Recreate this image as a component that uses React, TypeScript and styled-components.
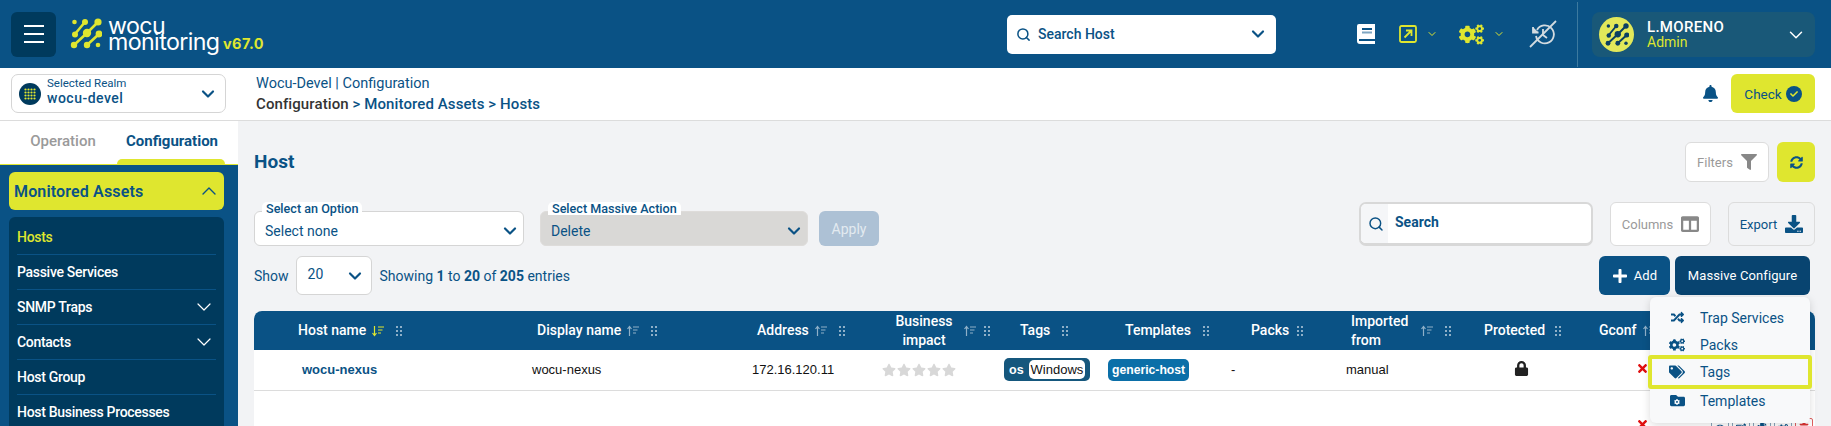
import React from "react";
import styled, { createGlobalStyle } from "styled-components";
import { ChevronDown, ChevronUp, Search as SearchGlyph } from "lucide-react";
import {
  FaBell, FaCheck, FaCogs, FaColumns, FaDownload, FaFilter, FaLock, FaPlus, FaRandom,
  FaStar, FaSyncAlt, FaTags, FaTimes, FaFolder, FaCog, FaEye, FaEdit, FaTrash, FaCopy,
} from "react-icons/fa";

const BLUE = "#0a5285";
const DARK = "#003a5d";
const LIME = "#dfe62f";
const UI = `Roboto, "Liberation Sans", sans-serif`;

const Global = createGlobalStyle`
  html, body { margin: 0; padding: 0; background: #f2f3f5; }
  body { font-family: ${UI}; color: ${BLUE}; overflow: hidden; }
  * { box-sizing: border-box; }
`;

const Page = styled.div`
  width: 1831px; height: 426px; overflow: hidden; display: flex; flex-direction: column;
`;

/* top bar */
const TopBar = styled.header`
  height: 68px; flex: none; background: ${BLUE}; display: flex; align-items: center; padding: 0 16px 0 11px;
`;
const Burger = styled.button`
  width: 45px; height: 45px; border: 0; border-radius: 6px; background: ${DARK}; display: flex; flex-direction: column;
  align-items: center; justify-content: center; gap: 6px; padding: 0;
  span { display: block; width: 20px; height: 2px; background: #fff; }
`;
const LogoWrap = styled.div`
  display: flex; align-items: flex-start; margin-left: 14px; width: 195px; height: 68px; padding-top: 18px; position: relative;
`;
const LogoText = styled.div`
  margin-left: 6px; color: #fff; font-family: Inter, sans-serif; font-size: 23.2px; line-height: 16px; letter-spacing: -0.6px;
`;
const Version = styled.span`
  position: absolute; left: 153px; top: 36px; color: ${LIME}; font: 700 14.5px/16px Inter, sans-serif; letter-spacing: 0.4px;
`;
const HostSearch = styled.div`
  margin-left: 742px; width: 269px; height: 39px; background: #fff; border-radius: 5px; display: flex; align-items: center;
  padding: 0 8px 0 9px; gap: 7px; font-size: 14px; font-weight: 500; color: ${BLUE};
  span { flex: 1; }
`;
const NavIcons = styled.div`
  display: flex; align-items: center; height: 100%; margin-left: 81px;
`;
const NavSlot = styled.div<{ $w: number }>`
  width: ${(p) => p.$w}px; display: flex; align-items: center; gap: 9px; flex: none;
`;
const Divider = styled.div`
  width: 1px; height: 65px; background: #3d7a9f; margin-left: 20px; flex: none;
`;
const UserBox = styled.div`
  margin-left: 14px; width: 223px; height: 45px; border-radius: 8px; background: #195878; display: flex; align-items: center;
  padding: 0 8px 0 7px; flex: none; margin-top: 1px;
`;
const Avatar = styled.div`
  width: 35px; height: 35px; border-radius: 50%; background: #e2e85a; display: flex; align-items: center; justify-content: center; flex: none;
`;
const UserText = styled.div`
  margin-left: 13px; flex: 1; line-height: 15px;
  b { display: block; font-weight: 500; font-size: 15px; color: #fff; letter-spacing: 0.3px; }
  span { display: block; font-size: 14px; color: ${LIME}; }
`;

/* sub bar */
const SubBar = styled.div`
  height: 53px; flex: none; background: #fff; border-bottom: 1px solid #dcdcdc; display: flex; align-items: center; padding: 0 16px 1px 11px;
`;
const RealmSelect = styled.div`
  width: 215px; height: 39px; border: 1px solid #d5d5d5; border-radius: 7px; display: flex; align-items: center; padding: 0 7px 0 7px;
`;
const RealmIcon = styled.div`
  width: 22px; height: 22px; border-radius: 50%; background: ${DARK}; flex: none; display: flex; align-items: center; justify-content: center;
`;
const RealmText = styled.div`
  margin-left: 6px; flex: 1; margin-top: -3px;
  small { display: block; font-size: 11.5px; line-height: 13px; }
  b { display: block; font-size: 14px; line-height: 17px; font-weight: 500; letter-spacing: 0.5px; }
`;
const Crumbs = styled.div`
  margin-left: 30px; flex: 1; font-size: 14.5px; line-height: 20px;
  b { font-weight: 500; display: block; font-size: 15px; letter-spacing: 0.1px; }
  b i { font-style: normal; color: #333; }
`;
const CheckButton = styled.button`
  width: 84px; height: 39px; border: 0; border-radius: 6px; background: ${LIME}; color: ${BLUE}; font: 400 13.5px ${UI};
  margin-left: 12px; display: flex; align-items: center; justify-content: center; gap: 4px; padding: 0;
`;
const CheckDot = styled.span`
  width: 16px; height: 16px; border-radius: 50%; background: ${BLUE}; color: ${LIME}; display: flex; align-items: center; justify-content: center;
`;

/* body */
const Body = styled.div`
  flex: 1; display: flex; min-height: 0;
`;
const Sidebar = styled.aside`
  width: 238px; flex: none; background: ${BLUE}; display: flex; flex-direction: column;
`;
const Tabs = styled.div`
  background: #fff; height: 44px; flex: none; display: flex; border-bottom: 1px solid ${LIME}; position: relative;
  &::after { content: ""; position: absolute; left: 117px; bottom: 0; width: 108px; height: 5px; background: ${LIME}; border-radius: 5px 5px 0 0; }
`;
const Tab = styled.div<{ $active?: boolean; $w: number }>`
  width: ${(p) => p.$w}px; padding-top: 11px; text-align: center; font-size: 15px; font-weight: ${(p) => (p.$active ? 700 : 500)};
  color: ${(p) => (p.$active ? BLUE : "#9a9a9a")}; white-space: nowrap;
`;
const SideInner = styled.div`
  padding: 7px 14px 0 9px; display: flex; flex-direction: column; gap: 7px;
`;
const GroupHead = styled.div`
  height: 38px; background: ${LIME}; border-radius: 6px; display: flex; align-items: center; justify-content: space-between;
  padding: 0 3px 0 5px; font-size: 16px; font-weight: 600; color: ${BLUE}; letter-spacing: 0.15px;
`;
const Menu = styled.div`
  background: ${DARK}; border-radius: 6px 6px 0 0; padding: 3px 8px;
`;
const MenuItem = styled.div<{ $active?: boolean }>`
  height: 35px; display: flex; align-items: center; justify-content: space-between; font-size: 14px; font-weight: 500; letter-spacing: -0.3px;
  color: ${(p) => (p.$active ? LIME : "#fff")}; border-bottom: 1px solid ${BLUE};
`;

const Main = styled.main`
  flex: 1; min-width: 0; padding: 21px 16px 0; display: flex; flex-direction: column;
`;
const TitleRow = styled.div`
  display: flex; align-items: center; justify-content: space-between; height: 40px;
`;
const Title = styled.h1`
  margin: -2px 0 0; font-size: 19px; font-weight: 700; color: ${BLUE};
`;
const Tools = styled.div`
  display: flex; gap: 8px;
`;
const GhostButton = styled.button<{ $w: number; $h: number; $plain?: boolean }>`
  width: ${(p) => p.$w}px; height: ${(p) => p.$h}px; border: 1px solid #dcdcdc; border-radius: 6px;
  background: ${(p) => (p.$plain ? "#f2f3f5" : "#fff")}; color: ${(p) => (p.$plain ? BLUE : "#9a9a9a")};
  font: 400 13px ${UI}; display: flex; align-items: center; justify-content: center; gap: 8px; padding: 0;
`;
const LimeSquare = styled.button`
  width: 38px; height: 40px; border: 0; border-radius: 6px; background: ${LIME}; color: ${BLUE}; display: flex; align-items: center; justify-content: center; padding: 0;
`;
const ToolRow = styled.div`
  margin-top: 20px; height: 44px; display: flex; align-items: flex-end;
`;
const FloatSelect = styled.div<{ $disabled?: boolean }>`
  position: relative; width: ${(p) => (p.$disabled ? 268 : 270)}px; height: 35px; border-radius: 6px; margin-right: ${(p) => (p.$disabled ? 11 : 16)}px;
  background: ${(p) => (p.$disabled ? "#d9d8d6" : "#fff")}; border: 1px solid ${(p) => (p.$disabled ? "#dedcda" : "#d5d5d5")};
  display: flex; align-items: center; justify-content: space-between; padding: 4px 3px 0 10px; font-size: 14px; color: ${BLUE};
`;
const FloatLabel = styled.label`
  position: absolute; left: 7px; top: -10px; background: #fff; border-radius: 5px 5px 0 0; padding: 0 4px; font-size: 12.6px; line-height: 13px; font-weight: 500; color: ${BLUE};
`;
const Apply = styled.button`
  width: 60px; height: 35px; border: 0; border-radius: 6px; background: #adc1d5; color: #e3eaf0; font: 400 14px ${UI}; padding: 0;
`;
const RightTools = styled.div`
  margin-left: auto; display: flex; gap: 17px;
`;
const SearchBox = styled.div`
  width: 234px; height: 44px; border: 1px solid #d8d8d8; border-width: 2px 2px 3px; border-radius: 7px; background: #fff; display: flex; overflow: hidden;
  font-size: 14px; font-weight: 700; color: ${BLUE};
`;
const SearchIcon = styled.div`
  width: 27px; background: #f5f6f8; display: flex; align-items: center; justify-content: center; padding-left: 3px;
`;
const SearchLabel = styled.div`
  padding: 7px 0 0 7px; line-height: 22px;
`;
const ShowRow = styled.div`
  margin-top: 10px; height: 39px; display: flex; align-items: center; font-size: 14px; color: ${BLUE};
  b { font-weight: 700; }
`;
const PageSize = styled.div`
  width: 76px; height: 39px; margin: 0 8px 0 7px; background: #fff; border: 1px solid #d5d5d5; border-radius: 6px; display: flex; align-items: center; justify-content: space-between;
  padding: 0 6px 4px 11px;
  svg { margin-top: 4px; }
`;
const ActionRight = styled.div`
  margin-left: auto; margin-right: 5px; display: flex; gap: 5px; position: relative;
`;
const SolidButton = styled.button<{ $w: number; $dark?: boolean }>`
  width: ${(p) => p.$w}px; height: 39px; border: 0; border-radius: 6px; background: ${(p) => (p.$dark ? "#084470" : BLUE)}; color: #fff;
  font: 400 13px ${UI}; display: flex; align-items: center; justify-content: center; gap: 6px; padding: 0; letter-spacing: 0.1px;
`;
const Dropdown = styled.div`
  position: absolute; right: 0; top: 41px; width: 160px; height: 126px; background: #f8f9fa; border-radius: 6px; box-shadow: 0 2px 8px rgba(0,0,0,.15);
  display: flex; flex-direction: column; padding-top: 7px; z-index: 5;
`;
const DropItem = styled.div<{ $on?: boolean }>`
  height: ${(p) => (p.$on ? 34 : 27)}px; flex: none; display: flex; align-items: center; font-size: 14px; color: ${BLUE}; padding-left: 19px; gap: 15px;
  svg { flex: none; }
  ${(p) => p.$on && `margin: -3px -2px -2px; border: 4px solid ${LIME}; border-radius: 3px; padding-left: 17px;`}
`;
const IconBox = styled.span`
  width: 16px; display: flex; justify-content: center; flex: none;
`;

/* table */
const TableWrap = styled.div`
  margin-top: 16px; flex: 1; background: #fff; border-radius: 8px 8px 0 0; overflow: hidden;
`;
const Table = styled.table`
  width: 1561px; table-layout: fixed; border-collapse: collapse;
`;
const Col = styled.col<{ $w: number }>`
  width: ${(p) => p.$w}px;
`;
const Th = styled.th<{ $pl: number }>`
  background: ${BLUE}; height: 39px; padding: 0 0 0 ${(p) => p.$pl}px; font-size: 14px; line-height: 19px; font-weight: 500; color: #fff; text-align: left;
`;
const ThInner = styled.div`
  display: flex; align-items: center;
`;
const ThLabel = styled.span<{ $center?: boolean; $w?: number }>`
  text-align: ${(p) => (p.$center ? "center" : "left")}; ${(p) => p.$w && `width: ${p.$w}px;`}
`;
const Td = styled.td<{ $pl: number; $h?: number }>`
  height: ${(p) => p.$h ?? 40}px; padding: 0 0 0 ${(p) => p.$pl}px; font: 13px "Liberation Sans", Arial, sans-serif; color: #111;
  border-bottom: 1px solid #dcdcdc;
`;
const HostLink = styled.a`
  color: ${BLUE}; font-weight: 700;
`;
const Stars = styled.div`
  display: flex; color: #d8d8d8; gap: 1px;
`;
const OsTag = styled.span`
  display: inline-flex; align-items: center; height: 23px; border-radius: 5px; background: #15577d; padding: 0 5px; color: #fff; font-weight: 700; font-size: 12.5px; gap: 5px;
`;
const OsValue = styled.span`
  background: #fff; color: #111; font-weight: 400; font-size: 13px; border-radius: 5px; padding: 2px 2px; line-height: 15px;
`;
const TplTag = styled.span`
  display: inline-block; height: 22px; line-height: 22px; padding: 0 4px; border-radius: 5px; background: #0b6fa8; color: #fff; font-weight: 700; font-size: 12.2px;
`;
const RowActions = styled.div`
  display: flex; gap: 3px; margin-top: 4px;
`;
const RowAction = styled.span<{ $red?: boolean }>`
  width: 18px; height: 20px; border: 1px solid ${(p) => (p.$red ? "#e06060" : "#8aa5bb")}; color: ${(p) => (p.$red ? "#d33" : BLUE)}; border-radius: 2px; display: flex; align-items: center; justify-content: center;
`;

const SortIcon = ({ on }: { on?: boolean }) => (
  <svg width="12" height="12" viewBox="0 0 12 12" style={{ marginLeft: 6, flex: "none" }} stroke={on ? LIME : "#8fb0c8"} strokeWidth="1.2" fill="none">
    {on ? <path d="M2.5 1v9M.5 8l2 2.5 2-2.5" /> : <path d="M2.5 11V2M.5 4l2-2.5 2 2.5" />}
    <path d="M6 2h6M6 5h4.5M6 8h3" />
  </svg>
);
const DragIcon = ({ gap = 12 }: { gap?: number }) => (
  <svg width="6" height="10" viewBox="0 0 6 10" style={{ marginLeft: gap, flex: "none" }} fill="#8fb0c8">
    {[0, 4, 8].map((y) => [0, 4].map((x) => <rect key={`${x}${y}`} x={x} y={y} width="2" height="2" />))}
  </svg>
);
const Chevron = ({ size = 14, color = BLUE, w = 2.6 }: { size?: number; color?: string; w?: number }) => (
  <ChevronDown size={size + 6} color={color} strokeWidth={w} />
);
const LogoMark = ({ size = 32, color = LIME }: { size?: number; color?: string }) => (
  <svg width={size} height={size} viewBox="0 0 32 32" fill={color} stroke={color}>
    <g strokeWidth="2.6" fill="none" strokeLinecap="round">
      <path d="M15 4 5 16M28 4 17 15 4 27M29 16 17 27" />
    </g>
    <g stroke="none">
      <circle cx="4.5" cy="4" r="2.3" /><circle cx="15" cy="4" r="3" /><circle cx="28" cy="4" r="3.6" />
      <circle cx="5" cy="16.5" r="3" /><circle cx="17" cy="15" r="4.2" /><circle cx="29" cy="16" r="3.4" />
      <circle cx="4" cy="27" r="3.2" /><circle cx="17" cy="27" r="3.2" /><circle cx="28" cy="27" r="2.3" />
    </g>
  </svg>
);
const RealmGlyph = () => (
  <svg width="12" height="12" viewBox="0 0 12 12" fill={LIME}>
    {[0, 1, 2, 3].map((r) => [0, 1, 2, 3].map((c) => <circle key={`${r}${c}`} cx={1.5 + c * 3} cy={1.5 + r * 3} r="1.1" />))}
  </svg>
);
const BookIcon = () => (
  <svg width="18" height="20" viewBox="0 0 18 20">
    <path d="M2 0h16v20H3a3 3 0 0 1-3-3V2a2 2 0 0 1 2-2z" fill="#fff" />
    <rect x="5" y="4" width="10" height="2" fill="#0a5285" /><rect x="5" y="7.5" width="10" height="2" fill="#7fa6c2" />
    <rect x="2" y="15" width="16" height="2" fill="#0a5285" />
  </svg>
);
const LaunchIcon = () => (
  <svg width="18" height="18" viewBox="0 0 18 18" fill="none" stroke={LIME} strokeWidth="1.8">
    <rect x="1" y="1" width="16" height="16" rx="1.5" /><path d="M5.5 12.5 12 6M7 5.5h5.5V11" />
  </svg>
);
const NoHistoryIcon = () => (
  <svg width="28" height="28" viewBox="0 0 28 28" fill="none" stroke="#d3dbe0" strokeWidth="1.8">
    <path d="M8 10a9 9 0 1 1-1 6" /><path d="M4 7v5.5h5.5" fill="#d3dbe0" /><path d="M14 9v6l4 3" /><path d="M1 27 27 1" />
  </svg>
);
const TemplateGlyph = styled.span`
  position: relative; display: flex;
  svg + svg { position: absolute; left: 4.5px; top: 5.5px; color: #fff; }
`;

const cols = [256, 220, 135, 125, 110, 130, 100, 130, 125, 115, 115];

export default function App() {
  return (
    <Page>
      <Global />
      <TopBar>
        <Burger><span /><span /><span /></Burger>
        <LogoWrap>
          <LogoMark />
          <LogoText>wocu<br />monitoring</LogoText>
          <Version>v67.0</Version>
        </LogoWrap>
        <HostSearch>
          <SearchGlyph size={15} strokeWidth={2.4} />
          <span>Search Host</span>
          <Chevron />
        </HostSearch>
        <NavIcons>
          <NavSlot $w={42}><BookIcon /></NavSlot>
          <NavSlot $w={60}><LaunchIcon /><ChevronDown size={12} color={LIME} strokeWidth={2} /></NavSlot>
          <NavSlot $w={70}><FaCogs size={25} color={LIME} /><ChevronDown size={12} color={LIME} strokeWidth={2} /></NavSlot>
          <NavSlot $w={28}><NoHistoryIcon /></NavSlot>
        </NavIcons>
        <Divider />
        <UserBox>
          <Avatar><LogoMark size={24} color="#0a3f63" /></Avatar>
          <UserText><b>L.MORENO</b><span>Admin</span></UserText>
          <ChevronDown size={22} color="#fff" strokeWidth={1.6} />
        </UserBox>
      </TopBar>

      <SubBar>
        <RealmSelect>
          <RealmIcon><RealmGlyph /></RealmIcon>
          <RealmText><small>Selected Realm</small><b>wocu-devel</b></RealmText>
          <Chevron />
        </RealmSelect>
        <Crumbs>
          <div>Wocu-Devel | Configuration</div>
          <b><i>Configuration</i> &gt; Monitored Assets &gt; Hosts</b>
        </Crumbs>
        <FaBell size={17} color={BLUE} />
        <CheckButton>Check<CheckDot><FaCheck size={8} /></CheckDot></CheckButton>
      </SubBar>

      <Body>
        <Sidebar>
          <Tabs>
            <Tab $w={126}>Operation</Tab>
            <Tab $w={92} $active>Configuration</Tab>
          </Tabs>
          <SideInner>
            <GroupHead>Monitored Assets<ChevronUp size={24} strokeWidth={1.4} /></GroupHead>
            <Menu>
              <MenuItem $active>Hosts</MenuItem>
              <MenuItem>Passive Services</MenuItem>
              <MenuItem>SNMP Traps<ChevronDown size={24} strokeWidth={1.2} /></MenuItem>
              <MenuItem>Contacts<ChevronDown size={24} strokeWidth={1.2} /></MenuItem>
              <MenuItem>Host Group</MenuItem>
              <MenuItem>Host Business Processes</MenuItem>
            </Menu>
          </SideInner>
        </Sidebar>

        <Main>
          <TitleRow>
            <Title>Host</Title>
            <Tools>
              <GhostButton $w={84} $h={40}>Filters<FaFilter size={16} color="#888" /></GhostButton>
              <LimeSquare><FaSyncAlt size={13} /></LimeSquare>
            </Tools>
          </TitleRow>

          <ToolRow>
            <FloatSelect>
              <FloatLabel>Select an Option</FloatLabel>
              Select none<Chevron />
            </FloatSelect>
            <FloatSelect $disabled>
              <FloatLabel>Select Massive Action</FloatLabel>
              Delete<Chevron />
            </FloatSelect>
            <Apply>Apply</Apply>
            <RightTools>
              <SearchBox>
                <SearchIcon><SearchGlyph size={16} strokeWidth={2.2} /></SearchIcon>
                <SearchLabel>Search</SearchLabel>
              </SearchBox>
              <GhostButton $w={101} $h={44}>Columns<FaColumns size={18} color="#888" /></GhostButton>
              <GhostButton $w={87} $h={44} $plain>Export<FaDownload size={18} /></GhostButton>
            </RightTools>
          </ToolRow>

          <ShowRow>
            Show
            <PageSize>20<Chevron /></PageSize>
            <span>Showing <b>1</b> to <b>20</b> of <b>205</b> entries</span>
            <ActionRight>
              <SolidButton $w={71}><FaPlus size={16} />Add</SolidButton>
              <SolidButton $w={135} $dark>Massive Configure</SolidButton>
              <Dropdown>
                <DropItem><IconBox><FaRandom size={13} /></IconBox>Trap Services</DropItem>
                <DropItem><IconBox><FaCogs size={16} /></IconBox>Packs</DropItem>
                <DropItem $on><IconBox><FaTags size={16} /></IconBox>Tags</DropItem>
                <DropItem><IconBox><TemplateGlyph><FaFolder size={15} /><FaCog size={6} /></TemplateGlyph></IconBox>Templates</DropItem>
              </Dropdown>
            </ActionRight>
          </ShowRow>

          <TableWrap>
            <Table>
              <colgroup>{cols.map((w, i) => <Col key={i} $w={w} />)}</colgroup>
              <thead>
                <tr>
                  <Th $pl={44}><ThInner><ThLabel>Host name</ThLabel><SortIcon on /><DragIcon /></ThInner></Th>
                  <Th $pl={27}><ThInner><ThLabel>Display name</ThLabel><SortIcon /><DragIcon /></ThInner></Th>
                  <Th $pl={27}><ThInner><ThLabel>Address</ThLabel><SortIcon /><DragIcon /></ThInner></Th>
                  <Th $pl={25}><ThInner><ThLabel $center $w={68}>Business impact</ThLabel><SortIcon /><DragIcon gap={8} /></ThInner></Th>
                  <Th $pl={30}><ThInner><ThLabel>Tags</ThLabel><DragIcon /></ThInner></Th>
                  <Th $pl={25}><ThInner><ThLabel>Templates</ThLabel><DragIcon /></ThInner></Th>
                  <Th $pl={21}><ThInner><ThLabel>Packs</ThLabel><DragIcon gap={8} /></ThInner></Th>
                  <Th $pl={21}><ThInner><ThLabel $w={64}>Imported from</ThLabel><SortIcon /><DragIcon /></ThInner></Th>
                  <Th $pl={24}><ThInner><ThLabel>Protected</ThLabel><DragIcon gap={10} /></ThInner></Th>
                  <Th $pl={14}><ThInner><ThLabel>Gconf</ThLabel><SortIcon /><DragIcon /></ThInner></Th>
                  <Th $pl={0} />
                </tr>
              </thead>
              <tbody>
                <tr>
                  <Td $pl={48}><HostLink>wocu-nexus</HostLink></Td>
                  <Td $pl={22}>wocu-nexus</Td>
                  <Td $pl={22}>172.16.120.11</Td>
                  <Td $pl={17}><Stars>{[0, 1, 2, 3, 4].map((i) => <FaStar key={i} size={14} />)}</Stars></Td>
                  <Td $pl={14}><OsTag>os<OsValue>Windows</OsValue></OsTag></Td>
                  <Td $pl={8}><TplTag>generic-host</TplTag></Td>
                  <Td $pl={1}>-</Td>
                  <Td $pl={16}>manual</Td>
                  <Td $pl={54}><FaLock size={15} color="#222" /></Td>
                  <Td $pl={51}><FaTimes size={13} color="#e01010" /></Td>
                  <Td $pl={0} />
                </tr>
                <tr>
                  <Td $pl={48} $h={72} />
                  <Td $pl={22} $h={72} />
                  <Td $pl={22} $h={72} />
                  <Td $pl={17} $h={72} />
                  <Td $pl={14} $h={72} />
                  <Td $pl={8} $h={72} />
                  <Td $pl={1} $h={72} />
                  <Td $pl={16} $h={72} />
                  <Td $pl={54} $h={72} />
                  <Td $pl={51} $h={72}><FaTimes size={13} color="#e01010" /></Td>
                  <Td $pl={11} $h={72}>
                    <RowActions>
                      <RowAction><FaEye size={10} /></RowAction>
                      <RowAction><FaEdit size={10} /></RowAction>
                      <RowAction><FaCopy size={10} /></RowAction>
                      <RowAction><FaCogs size={10} /></RowAction>
                      <RowAction $red><FaTrash size={10} /></RowAction>
                    </RowActions>
                  </Td>
                </tr>
              </tbody>
            </Table>
          </TableWrap>
        </Main>
      </Body>
    </Page>
  );
}
